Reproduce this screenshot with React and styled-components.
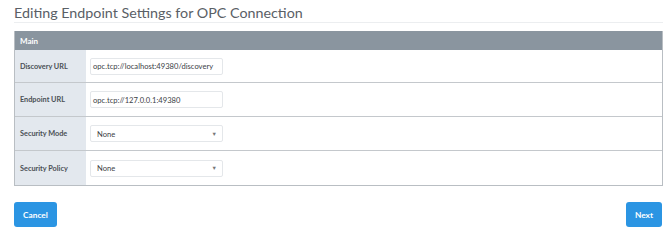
import React from 'react';
import styled, { createGlobalStyle } from 'styled-components';

const GlobalStyle = createGlobalStyle`
  body {
    margin: 0;
    background: #ffffff;
    font-family: Lato, "Open Sans", sans-serif;
  }
`;

const Page = styled.div`
  width: 670px;
  height: 235px;
  padding: 0 7px 0 14px;
  box-sizing: border-box;
  display: flex;
  flex-direction: column;
`;

const Title = styled.h1`
  margin: 0;
  padding: 4px 0 1px;
  height: 17px;
  font-size: 14.3px;
  font-weight: 400;
  color: #5a6066;
  line-height: 17px;
  border-bottom: 1px solid #eceef0;
`;

const Table = styled.div`
  margin-top: 8px;
  border: 1px solid #b9bec3;
  border-top: none;
  display: flex;
  flex-direction: column;
`;

const Header = styled.div`
  height: 19px;
  background: #8a959f;
  color: #ffffff;
  font-size: 8px;
  font-weight: 700;
  display: flex;
  align-items: center;
  padding-left: 5px;
`;

const Row = styled.div`
  display: flex;
  height: ${p => p.$h}px;
  border-top: ${p => (p.$first ? 'none' : '1px solid #c4c8cc')};
`;

const Label = styled.div`
  width: 66px;
  background: #e3e8ee;
  font-size: 7.3px;
  font-weight: 700;
  color: #4a4f55;
  display: flex;
  align-items: center;
  padding-left: 5px;
`;

const Cell = styled.div`
  flex: 1;
  display: flex;
  align-items: center;
  padding-left: 4px;
`;

const Field = styled.div`
  width: 133px;
  height: 17px;
  box-sizing: border-box;
  border: 1px solid #e4e7ea;
  border-radius: 2px;
  font-size: 7.6px;
  color: #3c4146;
  display: flex;
  align-items: center;
  justify-content: space-between;
  padding: 0 5px 0 ${p => (p.$select ? 6 : 2)}px;
`;

const Caret = styled.span`
  font-size: 5.5px;
  color: #777;
`;

const Footer = styled.div`
  display: flex;
  justify-content: space-between;
  margin-top: 16px;
  padding-right: 1px;
`;

const Button = styled.button`
  height: 25px;
  padding: 0 ${p => p.$pad}px;
  border: none;
  border-radius: 3px;
  background: #2b95e3;
  color: #ffffff;
  font-family: inherit;
  font-size: 8.3px;
  font-weight: 700;
`;

const rows = [
  { label: 'Discovery URL', value: 'opc.tcp://localhost:49380/discovery', h: 32 },
  { label: 'Endpoint URL', value: 'opc.tcp://127.0.0.1:49380', h: 33 },
  { label: 'Security Mode', value: 'None', select: true, h: 33 },
  { label: 'Security Policy', value: 'None', select: true, h: 34 },
];

export default function App() {
  return (
    <>
      <GlobalStyle />
      <Page>
        <Title>Editing Endpoint Settings for OPC Connection</Title>
        <Table>
          <Header>Main</Header>
          {rows.map((r, i) => (
            <Row key={r.label} $h={r.h} $first={i === 0}>
              <Label>{r.label}</Label>
              <Cell>
                <Field $select={r.select}>
                  <span>{r.value}</span>
                  {r.select && <Caret>▼</Caret>}
                </Field>
              </Cell>
            </Row>
          ))}
        </Table>
        <Footer>
          <Button $pad={9}>Cancel</Button>
          <Button $pad={9}>Next</Button>
        </Footer>
      </Page>
    </>
  );
}
